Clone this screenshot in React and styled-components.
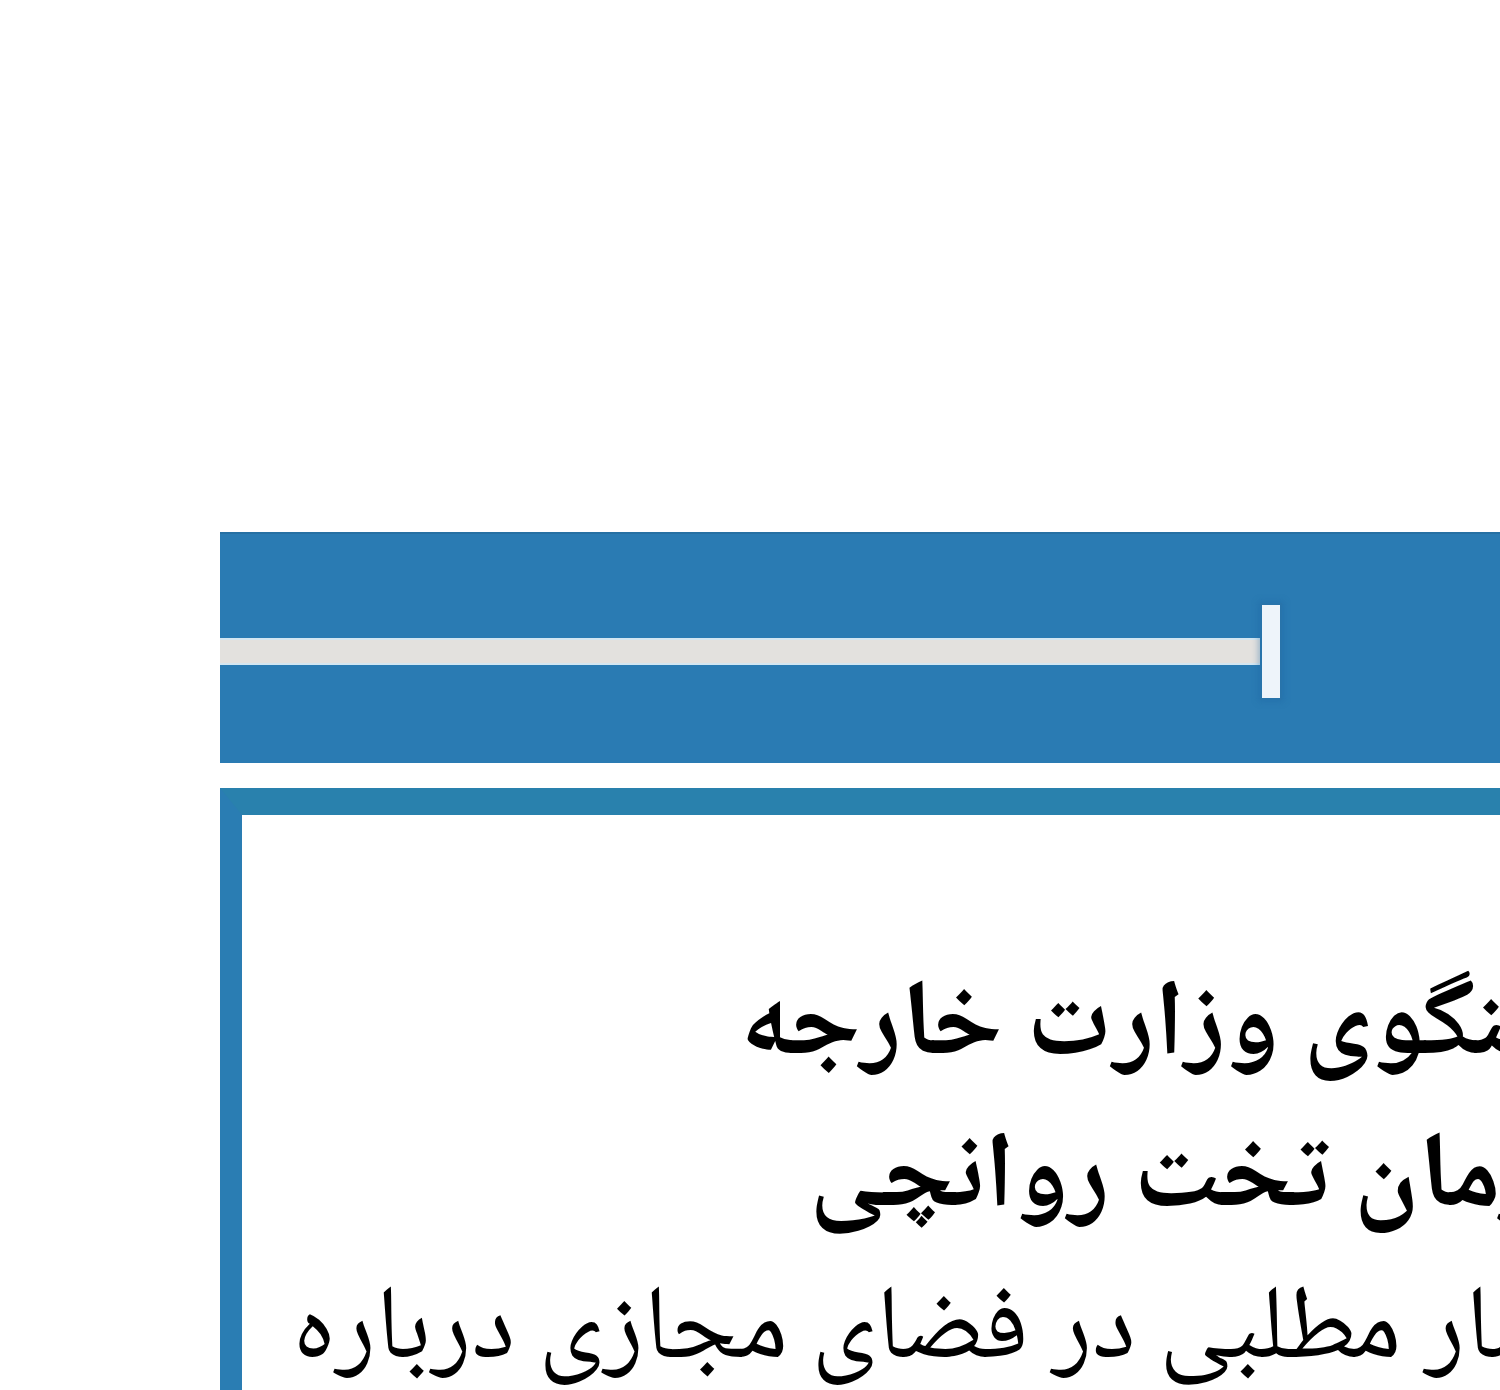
import React from "react";
import styled, { createGlobalStyle } from "styled-components";

const Global = createGlobalStyle`
  html, body {
    margin: 0;
    padding: 0;
    background: #ffffff;
    overflow: hidden;
  }
`;

const Page = styled.div`
  width: 1500px;
  height: 1390px;
  box-sizing: border-box;
  padding: 532px 0 0 220px;
  overflow: hidden;
  background: #ffffff;
`;

const Column = styled.div`
  width: 1500px;
  display: flex;
  flex-direction: column;
  gap: 25px;
`;

const Header = styled.header`
  height: 231px;
  background: #2a7bb3;
  border-top: 2px solid #2670a3;
  box-sizing: border-box;
  display: flex;
  align-items: center;
  padding-top: 6px;
`;

/* progress slider: filled part of the track, then the handle */
const Track = styled.div`
  display: flex;
  align-items: center;
`;

const Fill = styled.div`
  width: ${(p) => p.$width}px;
  height: 23px;
  background: #e3e1de;
  box-shadow: 0 -2px 0 #d3e6f1, 0 2px 0 #d3e6f1;
`;

const Thumb = styled.div`
  width: 18px;
  height: 93px;
  background: #eef4fa;
  box-shadow: 0 0 0 2px #2874ab, 0 0 6px 4px rgba(30, 100, 160, 0.35);
`;

const Card = styled.article`
  border-top: 27px solid #2981ad;
  border-left: 22px solid #2a7db3;
  background: #ffffff;
  height: 700px;
  box-sizing: border-box;
`;

const Body = styled.div`
  direction: rtl;
  display: flex;
  flex-direction: column;
  align-items: flex-start;
  padding: 140px 67px 0 0;
  font-family: "Noto Naskh Arabic", "DejaVu Sans", sans-serif;
  color: #000000;
`;

const Line = styled.div`
  white-space: nowrap;
  font-size: ${(p) => p.$size}px;
  font-weight: ${(p) => (p.$bold ? 700 : 400)};
  line-height: 152px;
  height: 152px;
`;

export default function App() {
  return (
    <>
      <Global />
      <Page>
        <Column>
          <Header>
            <Track>
              <Fill $width={1042} />
              <Thumb />
            </Track>
          </Header>
          <Card>
            <Body>
              <Line $bold $size={108}>سخنگوی وزارت خارجه</Line>
              <Line $bold $size={108}>در زمان تخت روانچی</Line>
              <Line $size={105}>انتشار مطلبی در فضای مجازی درباره</Line>
            </Body>
          </Card>
        </Column>
      </Page>
    </>
  );
}
